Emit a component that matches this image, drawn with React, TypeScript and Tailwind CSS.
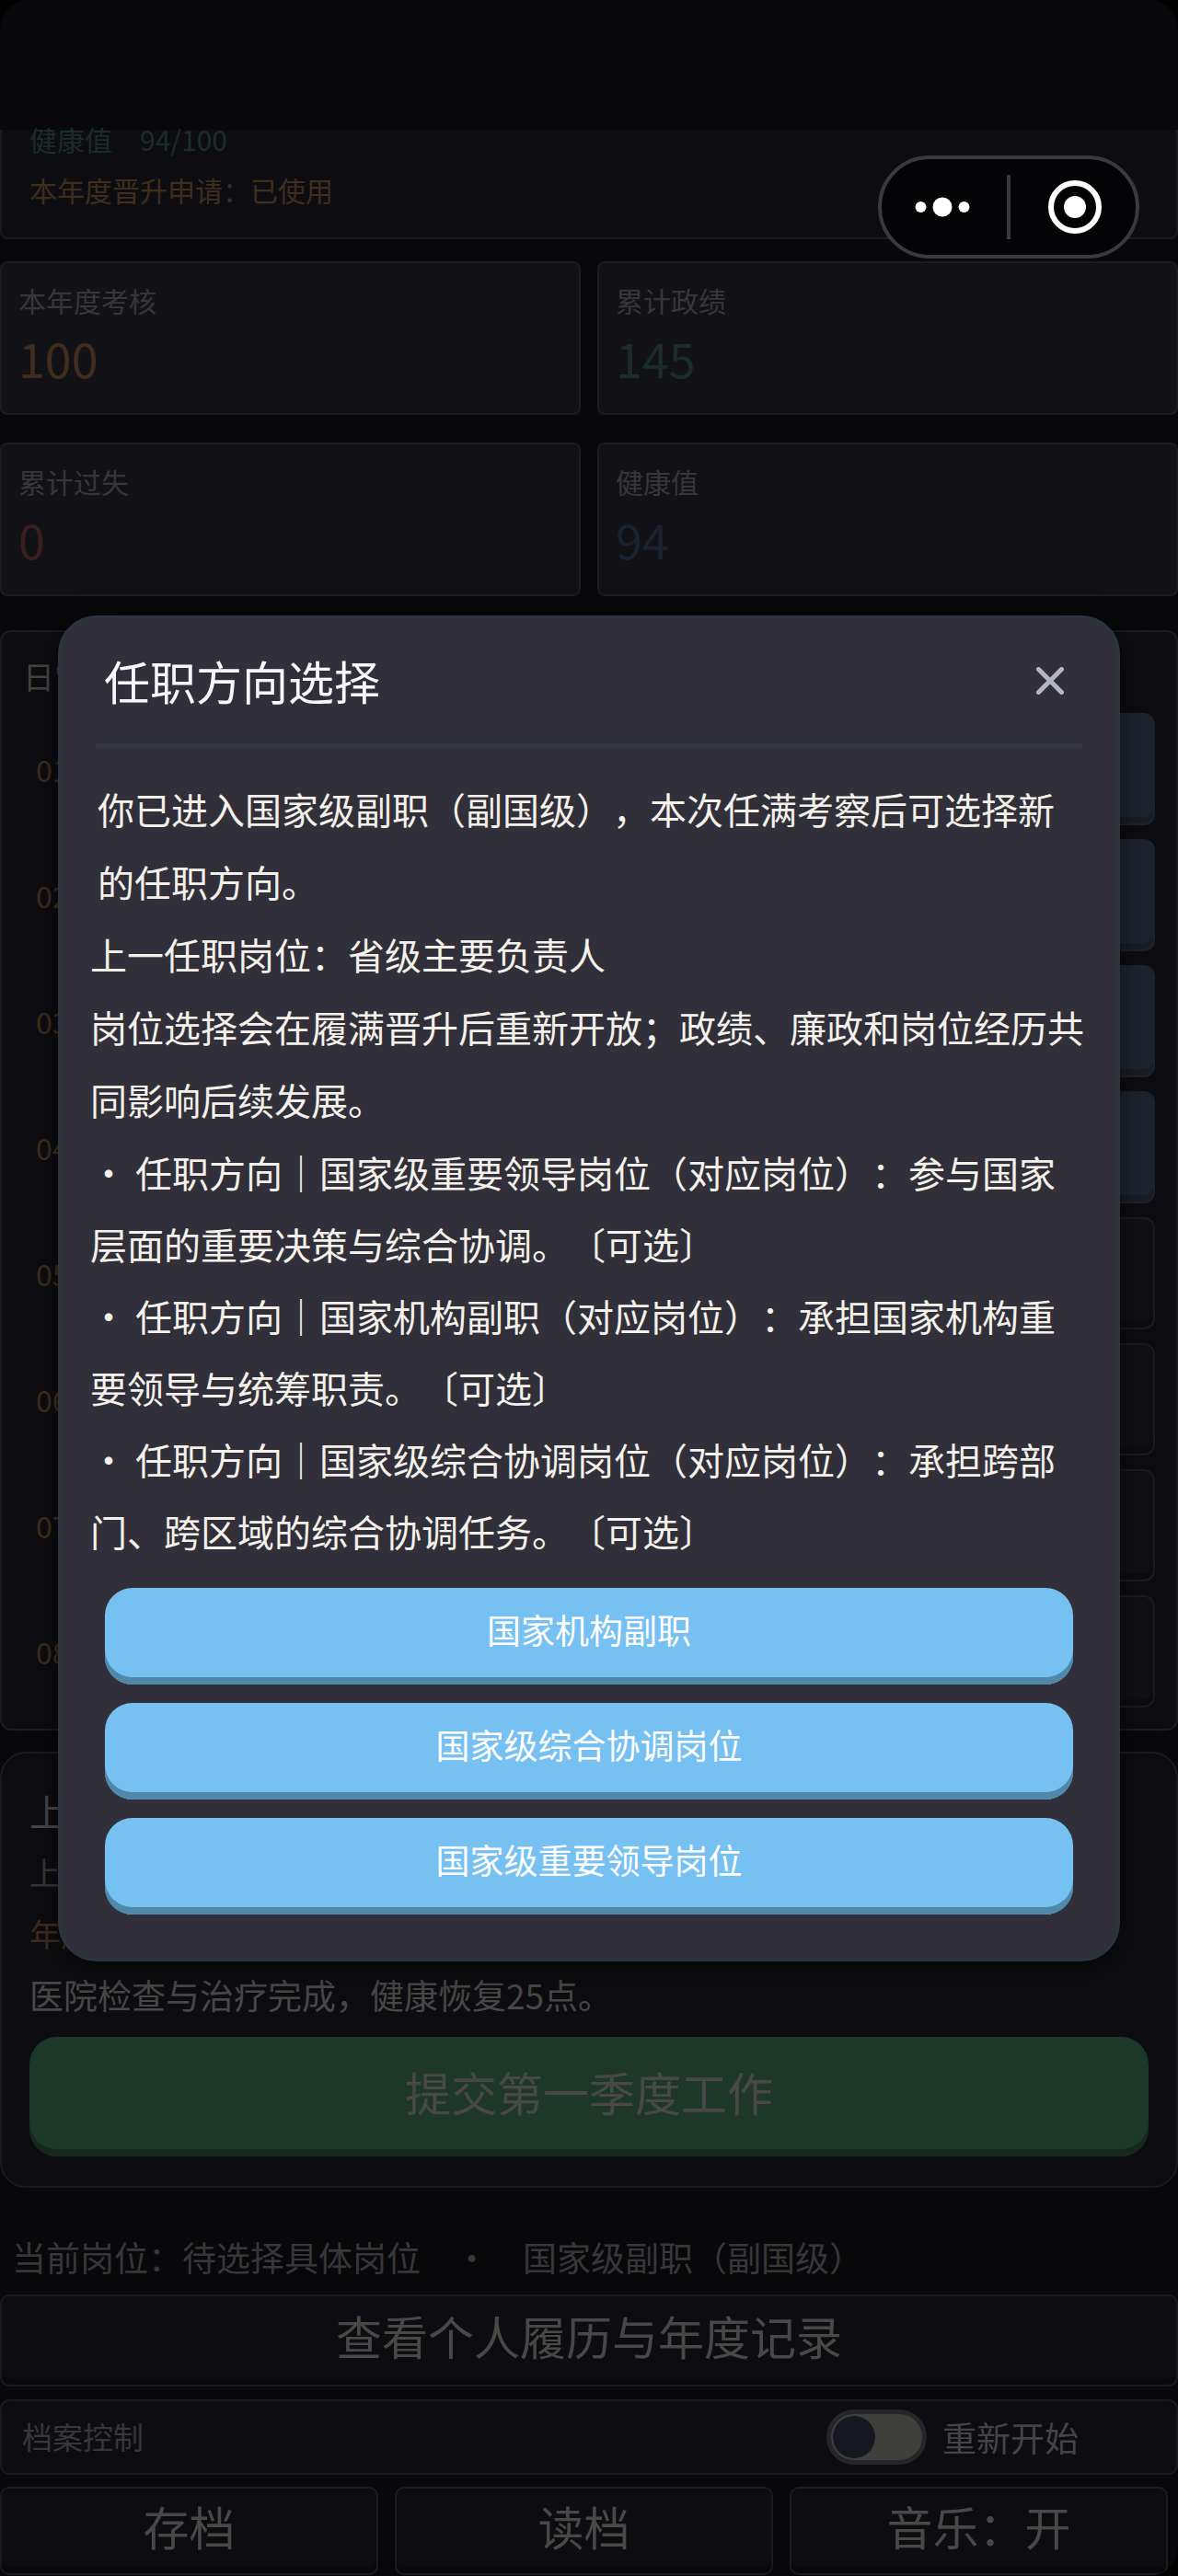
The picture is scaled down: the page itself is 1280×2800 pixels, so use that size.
import React, { useState } from "react";

type Stat = {
  label: string;
  value: number;
  color: string;
};

const stats: Stat[] = [
  { label: "本年度考核", value: 100, color: "text-[#3f2d1e]" },
  { label: "累计政绩", value: 145, color: "text-[#1c2c26]" },
  { label: "累计过失", value: 0, color: "text-[#3b1f20]" },
  { label: "健康值", value: 94, color: "text-[#1b2230]" },
];

const tasks = [
  { id: "01", active: true },
  { id: "02", active: true },
  { id: "03", active: true },
  { id: "04", active: true },
  { id: "05", active: false },
  { id: "06", active: false },
  { id: "07", active: false },
  { id: "08", active: false },
];

const directions = [
  "・ 任职方向｜国家级重要领导岗位（对应岗位）：参与国家层面的重要决策与综合协调。〔可选〕",
  "・ 任职方向｜国家机构副职（对应岗位）：承担国家机构重要领导与统筹职责。〔可选〕",
  "・ 任职方向｜国家级综合协调岗位（对应岗位）：承担跨部门、跨区域的综合协调任务。〔可选〕",
];

const choices = ["国家机构副职", "国家级综合协调岗位", "国家级重要领导岗位"];

function StatCard({ label, value, color }: Stat) {
  return (
    <div className="rounded-lg border-2 border-[#1c1c20] bg-[#121216] px-[18px] pt-5 pb-[30px]">
      <p className="text-[30px] leading-[40px] text-[#373739]">{label}</p>
      <p className={`mt-[13px] text-[52px] leading-[60px] ${color}`}>{value}</p>
    </div>
  );
}

function Capsule() {
  return (
    <div className="absolute top-[169px] right-[42px] z-20 flex h-[112px] w-[284px] items-center rounded-full border-4 border-[#3a3a3c] bg-[#040406]">
      <button aria-label="更多" className="flex flex-1 justify-center pr-1">
        <svg width="60" height="24" viewBox="0 0 60 24" fill="#fff">
          <circle cx="6.5" cy="12" r="6" />
          <circle cx="30" cy="12" r="10.5" />
          <circle cx="53.5" cy="12" r="6" />
        </svg>
      </button>
      <span className="h-[70px] w-1 bg-[#3a3a3c]" />
      <button aria-label="关闭小程序" className="flex flex-1 justify-center pl-1">
        <svg width="60" height="60" viewBox="0 0 60 60">
          <circle cx="30" cy="30" r="26" fill="none" stroke="#fff" strokeWidth="6" />
          <circle cx="30" cy="30" r="12" fill="#fff" />
        </svg>
      </button>
    </div>
  );
}

function DirectionDialog({ onClose }: { onClose: () => void }) {
  return (
    <div className="absolute inset-0 z-10 flex items-center justify-center px-[63px]">
      <div
        role="dialog"
        aria-labelledby="dialog-title"
        className="w-full rounded-[42px] border-[3px] border-[#2b3542] bg-[#31303a] pb-12 shadow-[0_8px_32px_rgba(0,0,0,0.5)]"
      >
        <header className="mx-[38px] flex h-[141px] items-center justify-between border-b-[5px] border-[#313743] pr-5 pl-[9px]">
          <h2 id="dialog-title" className="pb-0.5 text-[50px] leading-[64px] text-[#f6f6fc]">
            任职方向选择
          </h2>
          <button aria-label="关闭" onClick={onClose}>
            <svg
              width="30"
              height="30"
              viewBox="0 0 30 30"
              stroke="#b2b6c6"
              strokeWidth="5"
              strokeLinecap="round"
            >
              <path d="M2.5 2.5 27.5 27.5M27.5 2.5 2.5 27.5" />
            </svg>
          </button>
        </header>

        <div className="px-8 pt-[27px]">
          <div className="text-[40px] text-[#f4f1ea]">
            <div className="leading-[79px]">
              <p className="px-2">
                你已进入国家级副职（副国级），本次任满考察后可选择新的任职方向。
              </p>
              <p>上一任职岗位：省级主要负责人</p>
              <p>岗位选择会在履满晋升后重新开放；政绩、廉政和岗位经历共同影响后续发展。</p>
            </div>
            <div className="leading-[78px]">
              {directions.map((text) => (
                <p key={text}>{text}</p>
              ))}
            </div>
          </div>

          <div className="mt-[23px] flex flex-col gap-5 px-4">
            {choices.map((choice) => (
              <button
                key={choice}
                onClick={onClose}
                className="h-[105px] rounded-[30px] bg-[#76c1f2] pb-3 text-[37px] text-white shadow-[inset_0_-8px_0_#5088aa]"
              >
                {choice}
              </button>
            ))}
          </div>
        </div>
      </div>
    </div>
  );
}

export default function App() {
  const [open, setOpen] = useState(true);
  const [restart, setRestart] = useState(false);

  return (
    <div className="relative min-h-screen bg-black font-['Noto_Sans_CJK_SC',sans-serif] [text-spacing-trim:space-all]">
      <main className="overflow-hidden rounded-[32px] rounded-bl-none bg-[#08080a]">
        <div className="h-[141px]" />

        <section className="rounded-b-lg border-2 border-t-0 border-[#1c1c20] bg-[#0d0d11] px-[30px] pb-[25px] text-[30px]">
          <p className="leading-[20px] text-[#1c2c26]">健康值　94/100</p>
          <p className="mt-[18px] leading-[54px] text-[#3f2d1e]">本年度晋升申请：已使用</p>
        </section>

        <section className="mt-6 grid grid-cols-2 gap-x-[18px] gap-y-[30px]">
          {stats.map((stat) => (
            <StatCard key={stat.label} {...stat} />
          ))}
        </section>

        <section className="mt-[37px] rounded-xl border-2 border-[#1c1c20] bg-[#0d0d11] px-[23px] pb-[23px]">
          <h3 className="pt-[23px] pb-[15px] text-[34px] leading-[50px] text-[#444442]">日常</h3>
          <ul className="flex flex-col gap-[15px]">
            {tasks.map((task) => (
              <li key={task.id} className="flex items-center justify-between pl-3.5">
                <span className="text-[32px] text-[#3f2d1e]">{task.id}</span>
                <button
                  aria-label={`安排 ${task.id}`}
                  className={
                    task.active
                      ? "h-[122px] w-60 rounded-xl border-2 border-[#1e222a] bg-[#1e242f] shadow-[inset_0_-7px_0_#181d27]"
                      : "h-[122px] w-60 rounded-xl border-2 border-[#1c1c1f] bg-[#111114] shadow-[inset_0_-7px_0_#0d0d10]"
                  }
                />
              </li>
            ))}
          </ul>
        </section>

        <section className="mt-[23px] rounded-[28px] border-2 border-[#1c1c20] bg-[#0d0d11] px-[30px] pt-[30px] pb-8">
          <h3 className="text-[40px] leading-[65px] text-[#484846]">上季</h3>
          <div className="leading-[67px]">
            <p className="text-[34px] text-[#373739]">上季</p>
            <p className="text-[34px] text-[#3f2d1e]">年度</p>
            <p className="text-[37px] text-[#484846]">医院检查与治疗完成，健康恢复25点。</p>
          </div>
          <button className="mt-3 block h-[130px] w-full rounded-[30px] bg-[#1d3829] pb-3 text-[50px] text-[#484848] shadow-[inset_0_-8px_0_#14281d]">
            提交第一季度工作
          </button>
        </section>

        <p className="mt-12 mb-3.5 px-[13px] text-[37px] leading-[54px] text-[#373739]">
          当前岗位：待选择具体岗位　・　国家级副职（副国级）
        </p>

        <button className="block h-[100px] w-full rounded-[10px] border-2 border-[#1c1c20] bg-[#0d0d11] pb-3 text-[50px] leading-[64px] text-[#484846] shadow-[inset_0_-7px_0_#09090c]">
          查看个人履历与年度记录
        </button>

        <div className="mt-3.5 flex h-[82px] items-center justify-between rounded-[10px] border-2 border-[#1c1c20] bg-[#0d0d11] pr-[106px] pl-[22px]">
          <span className="text-[33px] text-[#373739]">档案控制</span>
          <label className="flex items-center gap-[17px] text-[37px] leading-[54px] text-[#444446]">
            <input
              type="checkbox"
              checked={restart}
              onChange={(e) => setRestart(e.target.checked)}
              className="h-[60px] w-[109px] appearance-none rounded-full border-[5px] border-[#25252a] bg-[#3f403b] before:m-0.5 before:block before:size-[46px] before:rounded-full before:bg-[#151820] before:content-[''] checked:before:ml-[51px]"
            />
            重新开始
          </label>
        </div>

        <div className="mt-[13px] grid grid-cols-3 gap-[18px] pr-[11px] pb-px">
          {["存档", "读档", "音乐：开"].map((name) => (
            <button
              key={name}
              className="h-24 rounded-[10px] border-2 border-[#1c1c20] bg-[#0d0d11] pb-3 text-[50px] leading-[64px] text-[#484846] shadow-[inset_0_-7px_0_#09090c]"
            >
              {name}
            </button>
          ))}
        </div>
      </main>

      <Capsule />
      {open && <DirectionDialog onClose={() => setOpen(false)} />}
    </div>
  );
}
